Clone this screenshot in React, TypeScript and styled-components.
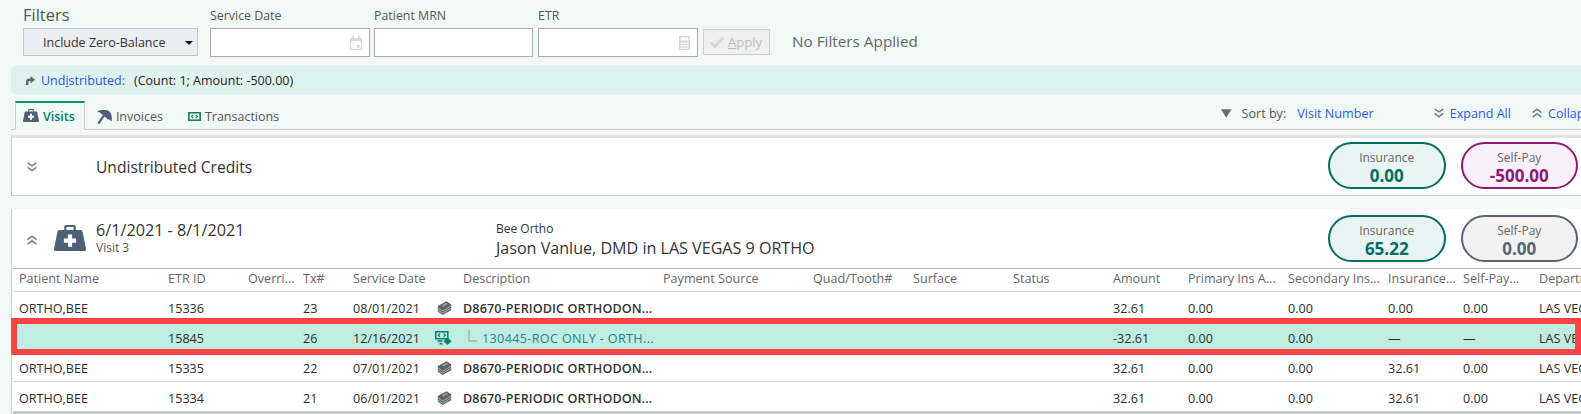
import React from 'react';
import styled, { createGlobalStyle } from 'styled-components';

const Global = createGlobalStyle`
  html, body { margin: 0; padding: 0; background: #f0f9f6; }
  body { font-family: "Open Sans", "Noto Sans", sans-serif; color: #333; width: 1581px; height: 414px; overflow: hidden; }
`;
const Page = styled.div`
  position: relative; width: 1581px; height: 414px; overflow: hidden; background: #f0f9f6;
`;
const FilterBar = styled.div`
  height: 65px; display: flex; padding-left: 23px; box-sizing: border-box; align-items: flex-start;
`;
const Field = styled.div<{ $w: number; $mr?: number }>`
  width: ${p => p.$w}px; margin-right: ${p => p.$mr ?? 4}px; flex: none;
`;
const FilterTitle = styled.div`
  font-size: 16.5px; line-height: 20px; height: 28px; padding-top: 5px; box-sizing: border-box; color: #555;
`;
const FieldLabel = styled.div`
  font-size: 12.4px; line-height: 16px; height: 28px; padding-top: 8px; box-sizing: border-box; color: #555;
`;
const Select = styled.div`
  height: 28px; box-sizing: border-box; border: 1px solid #c2c6c8; background: #eceff2; display: flex; align-items: center;
  padding-left: 19px; font-size: 12.5px; color: #333; position: relative;
  &::after { content: ""; position: absolute; right: 4px; top: 12px; border: 4px solid transparent; border-top: 4px solid #111; }
`;
const Input = styled.div`
  height: 29px; box-sizing: border-box; border: 1px solid #aaa; background: #fff; display: flex; align-items: center; justify-content: flex-end; padding-right: 7px;
`;
const ApplyBtn = styled.div`
  margin-top: 29px; width: 67px; height: 26px; box-sizing: border-box; border: 1px solid #ccc; background: #efefef; color: #bbb;
  display: flex; align-items: center; gap: 4px; padding-left: 6px; font-size: 13px; margin-left: 1px; flex: none;
  u { text-decoration: underline; }
`;
const NoFilters = styled.div`
  margin-top: 31px; margin-left: 22px; font-size: 15.3px; line-height: 20px; color: #666;
`;
const Band = styled.div`
  margin-left: 11px; height: 30px; background: #e0f2ee; border-radius: 6px 0 0 6px; display: flex; align-items: center; padding-left: 15px; font-size: 12.5px; color: #222;
`;
const BandLink = styled.a`
  color: #2952f0; margin: 0 9px 0 6px; u { text-underline-offset: 1px; }
`;
const TabBar = styled.div`
  margin: 5px 0 0 11px; height: 30px; box-sizing: border-box; border-bottom: 1px solid #c8cccc; display: flex; align-items: flex-end; padding-left: 4px; font-size: 12.5px; position: relative;
`;
const Tab = styled.div<{ $active?: boolean; $pad?: number }>`
  height: 29px; margin-bottom: -1px; box-sizing: border-box; display: flex; align-items: center; gap: 4px; flex: none;
  padding: 0 ${p => (p.$active ? '9px' : `${p.$pad ?? 8}px`)} 0 ${p => (p.$active ? '7px' : '12px')};
  color: ${p => (p.$active ? '#00806e' : '#555')};
  font-weight: ${p => (p.$active ? 600 : 400)};
  border-top: ${p => (p.$active ? '2px solid #009b7d' : '2px solid transparent')};
  border-left: ${p => (p.$active ? '1px solid #c8cccc' : 'none')};
  border-right: ${p => (p.$active ? '1px solid #c8cccc' : 'none')};
  border-bottom: ${p => (p.$active ? '1px solid #f0f9f6' : 'none')};
`;
const TabTools = styled.div`
  margin-left: auto; display: flex; align-items: center; height: 28px; padding-bottom: 4px; box-sizing: border-box; flex: none; width: 360px; white-space: nowrap; font-size: 12.6px; color: #555;
`;
const SortLabel = styled.span`margin: 0 11px 0 10px;`;
const ToolLink = styled.a<{ $gap?: number }>`
  color: #2f55f2; margin-right: ${p => p.$gap ?? 0}px; display: inline-flex; align-items: center; gap: 6px; flex: none;
`;
const Panel = styled.section<{ $top: number }>`
  margin: ${p => p.$top}px 0 0 11px; background: #fff; border-left: 1px solid #c8cccc;
`;
const PanelHead = styled.div<{ $h: number }>`
  height: ${p => p.$h}px; display: flex; align-items: center; padding-left: 15px; box-sizing: border-box; position: relative;
`;
const FirstPanel = styled(Panel)`
  border-top: 3px solid #dfe3e3; border-bottom: 1px solid #c8cccc;
`;
const Chevron = styled.div<{ $dy?: number }>`width: 10px; flex: none; display: flex; margin-top: ${p => p.$dy ?? 0}px;`;
const CreditsTitle = styled.div`margin-left: 59px; font-size: 15.6px; color: #333;`;
const VisitIcon = styled.div`margin-left: 17px; flex: none; display: flex; margin-top: -1px;`;
const VisitInfo = styled.div`margin-left: 10px; width: 400px; flex: none; margin-top: -3px;`;
const VisitDate = styled.div`font-size: 16.2px; line-height: 22px; color: #333;`;
const VisitSub = styled.div`font-size: 12px; line-height: 14px; color: #555;`;
const ProviderInfo = styled.div`margin-top: 3px;`;
const ProviderSmall = styled.div`font-size: 12px; line-height: 16px; color: #333;`;
const ProviderBig = styled.div`font-size: 16.1px; line-height: 22px; color: #333;`;
const Pills = styled.div<{ $top: number }>`
  margin-left: auto; display: flex; gap: 15px; width: 253px; flex: none; align-self: flex-start; margin-top: ${p => p.$top}px;
`;
const Pill = styled.div<{ $border: string; $bg: string; $color: string }>`
  width: 117.5px; height: 47px; box-sizing: border-box; border: 2px solid ${p => p.$border}; background: ${p => p.$bg}; border-radius: 24px;
  display: flex; flex-direction: column; align-items: center; justify-content: flex-start; padding-top: 6px; color: ${p => p.$color}; flex: none;
`;
const PillLabel = styled.div`font-size: 12px; line-height: 15px; color: #666;`;
const PillValue = styled.div`font-size: 17px; line-height: 22px; font-weight: 700;`;
const TableWrap = styled.div`
  margin-left: 1px; border-top: 1px solid #b5b9b9; border-bottom: 2px solid #bfc3c3; background: #fff;
`;
const Row = styled.div<{ $head?: boolean; $hl?: boolean }>`
  display: grid;
  grid-template-columns: 149px 80px 55px 50px 85px 25px 200px 150px 100px 100px 100px 75px 100px 100px 75px 76px 48px;
  height: ${p => (p.$head ? 23 : 30)}px; box-sizing: border-box; align-items: center; white-space: nowrap;
  padding: ${p => (p.$head ? '0 0 4px' : '4px 0 0')};
  border-bottom: 1px solid #d5d8d8; font-size: 12.6px;
  color: ${p => (p.$head ? '#666' : '#2c2c2c')};
  background: ${p => (p.$hl ? '#bfede2' : '#fff')};
`;
const Cell = styled.div`
  padding-left: 6px; overflow: hidden; min-width: 0; display: flex; align-items: center; height: 100%;
`;
const IconCell = styled(Cell)<{ $shift?: number }>`padding-left: ${p => p.$shift ?? 5}px; margin-top: -2px;`;
const Desc = styled(Cell)`font-weight: 600; color: #333; letter-spacing: 0.1px;`;
const Sub = styled(Cell)`color: #2a7d8c; letter-spacing: 0.35px; gap: 5px;`;
const Connector = styled.span`
  width: 9px; height: 12px; margin: -5px 0 0 5px; box-sizing: border-box; border-left: 2px solid #a9c4c2; border-bottom: 2px solid #a9c4c2; flex: none;
`;
const RedBox = styled.div`
  position: absolute; left: 11px; top: 318px; width: 1570px; height: 37px; box-sizing: border-box; border: 6px solid #ff4343; pointer-events: none;
`;

const Medkit = ({ w = 20, c = '#4e6078' }: { w?: number; c?: string }) => (
  <svg width={w} height={w * 0.82} viewBox="0 0 20 16.4">
    <path d="M6.400 3.500V1.200C6.400.5 6.900 0 7.600 0h4.800c.7 0 1.200.5 1.200 1.200v2.300h-1.400V1.300H7.800v2.200z" fill={c} />
    <path d="M3.600 3.200h12.800c.8 0 1.300.4 1.500 1.200L20 15c.1.8-.4 1.400-1.200 1.400H1.200C.4 16.400-.1 15.800 0 15L2.100 4.400C2.300 3.600 2.800 3.200 3.600 3.200z" fill={c} />
    <path d="M8.700 6h2.600v2.500h2.500v2.600h-2.500v2.500H8.700v-2.500H6.200V8.500h2.500z" fill="#fff" />
  </svg>
);
const Umbrella = () => (
  <svg width="15" height="14" viewBox="0 0 15 14">
    <path d="M0 1.500C4-.5 11-.5 13 2c2 3 2 6 1.500 9.500C13 9.500 11.500 9 10 9.200 10 8 9 7 7.500 7 7 5.500 6 4.500 4.500 4.300 4 3 2 1.800 0 1.500z" fill="#4e6078" />
    <path d="M6.500 6L1.800 12.800" stroke="#4e6078" strokeWidth="2.200" strokeLinecap="round" />
  </svg>
);
const Bill = () => (
  <svg width="13" height="9" viewBox="0 0 13 9">
    <rect x=".8" y=".8" width="11.400" height="7.400" fill="none" stroke="#1f7a5c" strokeWidth="1.600" />
    <path d="M5.200 2.800L3.500 4.500 5.200 6.200M7.800 2.800l1.700 1.700-1.700 1.700" fill="none" stroke="#1f7a5c" strokeWidth="1.200" />
  </svg>
);
const Stack = () => (
  <svg width="15" height="14" viewBox="0 0 15 14">
    <path d="M.8 5L9.500.3l4.700 3v5.900L5.700 14 .8 10.700z" fill="#5c6368" />
    <path d="M4.800 4.200l4.400-2.400 1.800 1.200-4.400 2.500z" fill="#959b9f" />
    <path d="M.8 6.900l4.900 3.100 8.500-4.900M.8 9.100l4.900 3.100 8.500-4.900" fill="none" stroke="#c9cdcf" strokeWidth=".7" />
  </svg>
);
const MoneyEdit = () => (
  <svg width="17" height="14" viewBox="0 0 17 14">
    <rect x=".8" y=".8" width="12" height="6.900" fill="none" stroke="#00806e" strokeWidth="1.500" />
    <path d="M5 2.500L3.300 4.200 5 5.900M8.600 2.500l1.700 1.700-1.700 1.700" fill="none" stroke="#00806e" strokeWidth="1.100" />
    <path d="M2.500 10h5M4.500 12.700h3" stroke="#00806e" strokeWidth="1.500" />
    <path d="M12.500 6.500l4 3.700-4 3.800-4-3.800z" fill="#00806e" />
  </svg>
);
const DoubleDown = ({ c = '#74818c' }: { c?: string }) => (
  <svg width="10" height="10" viewBox="0 0 10 10" style={{ flex: 'none' }}>
    <path d="M.6.800L5 3.800 9.400.8M.6 5.300L5 8.800l4.400-3.500" fill="none" stroke={c} strokeWidth="1.600" />
  </svg>
);
const DoubleUp = ({ c = '#74818c' }: { c?: string }) => (
  <svg width="10" height="10" viewBox="0 0 10 10" style={{ flex: 'none' }}>
    <path d="M.6 4.700L5 1.200l4.400 3.500M.6 9.200L5 5.700l4.400 3.500" fill="none" stroke={c} strokeWidth="1.600" />
  </svg>
);

const heads = ['Patient Name', 'ETR ID', 'Overri...', 'Tx#', 'Service Date', '', 'Description', 'Payment Source', 'Quad/Tooth#', 'Surface', 'Status', 'Amount', 'Primary Ins A...', 'Secondary Ins...', 'Insurance...', 'Self-Pay...', 'Department'];

type R = { name: string; id: string; tx: string; date: string; amt: string; ins: string; self: string; hl?: boolean };
const rows: R[] = [
  { name: 'ORTHO,BEE', id: '15336', tx: '23', date: '08/01/2021', amt: '32.61', ins: '0.00', self: '0.00' },
  { name: '', id: '15845', tx: '26', date: '12/16/2021', amt: '-32.61', ins: '—', self: '—', hl: true },
  { name: 'ORTHO,BEE', id: '15335', tx: '22', date: '07/01/2021', amt: '32.61', ins: '32.61', self: '0.00' },
  { name: 'ORTHO,BEE', id: '15334', tx: '21', date: '06/01/2021', amt: '32.61', ins: '32.61', self: '0.00' },
];

export default function App() {
  return (
    <Page>
      <Global />
      <FilterBar>
        <Field $w={175} $mr={12}>
          <FilterTitle>Filters</FilterTitle>
          <Select>Include Zero-Balance</Select>
        </Field>
        <Field $w={160}>
          <FieldLabel>Service Date</FieldLabel>
          <Input>
            <svg width="12" height="14" viewBox="0 0 12 14">
              <path d="M0 2h12v12H0z" fill="#d5d8dc" />
              <path d="M1.200 5h9.600v7.800H1.200z" fill="#fff" />
              <path d="M2.500 0h1.500v3H2.500zM8 0h1.500v3H8zM7 9h2.500v2.500H7z" fill="#cdd1d6" />
            </svg>
          </Input>
        </Field>
        <Field $w={159} $mr={5}>
          <FieldLabel>Patient MRN</FieldLabel>
          <Input />
        </Field>
        <Field $w={160}>
          <FieldLabel>ETR</FieldLabel>
          <Input>
            <svg width="11" height="14" viewBox="0 0 11 14">
              <path d="M0 0h11v14H0z" fill="#d5d8dc" />
              <path d="M1.500 1.500h8v3h-8zM1.500 6.500h2v1.500h-2zM4.500 6.500h2v1.500h-2zM7.500 6.500h2v1.500h-2zM1.500 9h2v1.500h-2zM4.500 9h2v1.500h-2zM7.500 9h2v1.500h-2zM1.500 11.500h2V13h-2zM4.500 11.500h2V13h-2zM7.500 11.500h2V13h-2z" fill="#fff" />
            </svg>
          </Input>
        </Field>
        <ApplyBtn>
          <svg width="14" height="12" viewBox="0 0 14 12"><path d="M1 6.500l4 4 8-9" fill="none" stroke="#cfdcd6" strokeWidth="3" /></svg>
          <span><u>A</u>pply</span>
        </ApplyBtn>
        <NoFilters>No Filters Applied</NoFilters>
      </FilterBar>
      <Band>
        <svg width="9" height="9" viewBox="0 0 9 9"><path d="M0 9V6C0 3.500 1.500 2.500 3.500 2.500H4.500V0L9 3.800 4.500 7.500V5H3.800C2.800 5 2.500 5.500 2.500 6.500V9z" fill="#5a6672" /></svg>
        <BandLink>Und<u>i</u>stributed:</BandLink>
        <span>(Count: 1; Amount: -500.00)</span>
      </Band>
      <TabBar>
        <Tab $active><Medkit w={16} /> Visits</Tab>
        <Tab $pad={13}><Umbrella /> Invoices</Tab>
        <Tab><Bill /> Transactions</Tab>
        <TabTools>
          <svg width="10.500" height="9" viewBox="0 0 11 9" style={{ flex: 'none' }}><path d="M0 0h11L5.500 9z" fill="#606c76" /></svg>
          <SortLabel>Sort by:</SortLabel>
          <ToolLink $gap={60}>Visit Number</ToolLink>
          <ToolLink $gap={21}><DoubleDown /> Expand All</ToolLink>
          <ToolLink><DoubleUp /> Collapse All</ToolLink>
        </TabTools>
      </TabBar>
      <FirstPanel $top={5}>
        <PanelHead $h={57}>
          <Chevron><DoubleDown /></Chevron>
          <CreditsTitle>Undistributed Credits</CreditsTitle>
          <Pills $top={4}>
            <Pill $border="#006d63" $bg="#e8f5f3" $color="#006d63"><PillLabel>Insurance</PillLabel><PillValue>0.00</PillValue></Pill>
            <Pill $border="#8e1a72" $bg="#f8f0fb" $color="#8e1a72"><PillLabel>Self-Pay</PillLabel><PillValue>-500.00</PillValue></Pill>
          </Pills>
        </PanelHead>
      </FirstPanel>
      <Panel $top={13}>
        <PanelHead $h={59}>
          <Chevron $dy={3}><DoubleUp /></Chevron>
          <VisitIcon><Medkit w={32} /></VisitIcon>
          <VisitInfo>
            <VisitDate>6/1/2021 - 8/1/2021</VisitDate>
            <VisitSub>Visit 3</VisitSub>
          </VisitInfo>
          <ProviderInfo>
            <ProviderSmall>Bee Ortho</ProviderSmall>
            <ProviderBig>Jason Vanlue, DMD in LAS VEGAS 9 ORTHO</ProviderBig>
          </ProviderInfo>
          <Pills $top={6}>
            <Pill $border="#006d63" $bg="#e8f5f3" $color="#006d63"><PillLabel>Insurance</PillLabel><PillValue>65.22</PillValue></Pill>
            <Pill $border="#5a6475" $bg="#f2f2f2" $color="#5a6475"><PillLabel>Self-Pay</PillLabel><PillValue>0.00</PillValue></Pill>
          </Pills>
        </PanelHead>
        <TableWrap>
          <Row $head>
            {heads.map((h, i) => <Cell key={i}>{h}</Cell>)}
          </Row>
          {rows.map(r => (
            <Row key={r.id} $hl={r.hl}>
              <Cell>{r.name}</Cell>
              <Cell>{r.id}</Cell>
              <Cell />
              <Cell>{r.tx}</Cell>
              <Cell>{r.date}</Cell>
              {r.hl ? <IconCell $shift={3}><MoneyEdit /></IconCell> : <IconCell><Stack /></IconCell>}
              {r.hl
                ? <Sub><Connector />130445-ROC ONLY - ORTH...</Sub>
                : <Desc>D8670-PERIODIC ORTHODON...</Desc>}
              <Cell />
              <Cell />
              <Cell />
              <Cell />
              <Cell>{r.amt}</Cell>
              <Cell>0.00</Cell>
              <Cell>0.00</Cell>
              <Cell>{r.ins}</Cell>
              <Cell>{r.self}</Cell>
              <Cell>LAS VEGAS 9 ORTHO</Cell>
            </Row>
          ))}
        </TableWrap>
      </Panel>
      <RedBox />
    </Page>
  );
}
